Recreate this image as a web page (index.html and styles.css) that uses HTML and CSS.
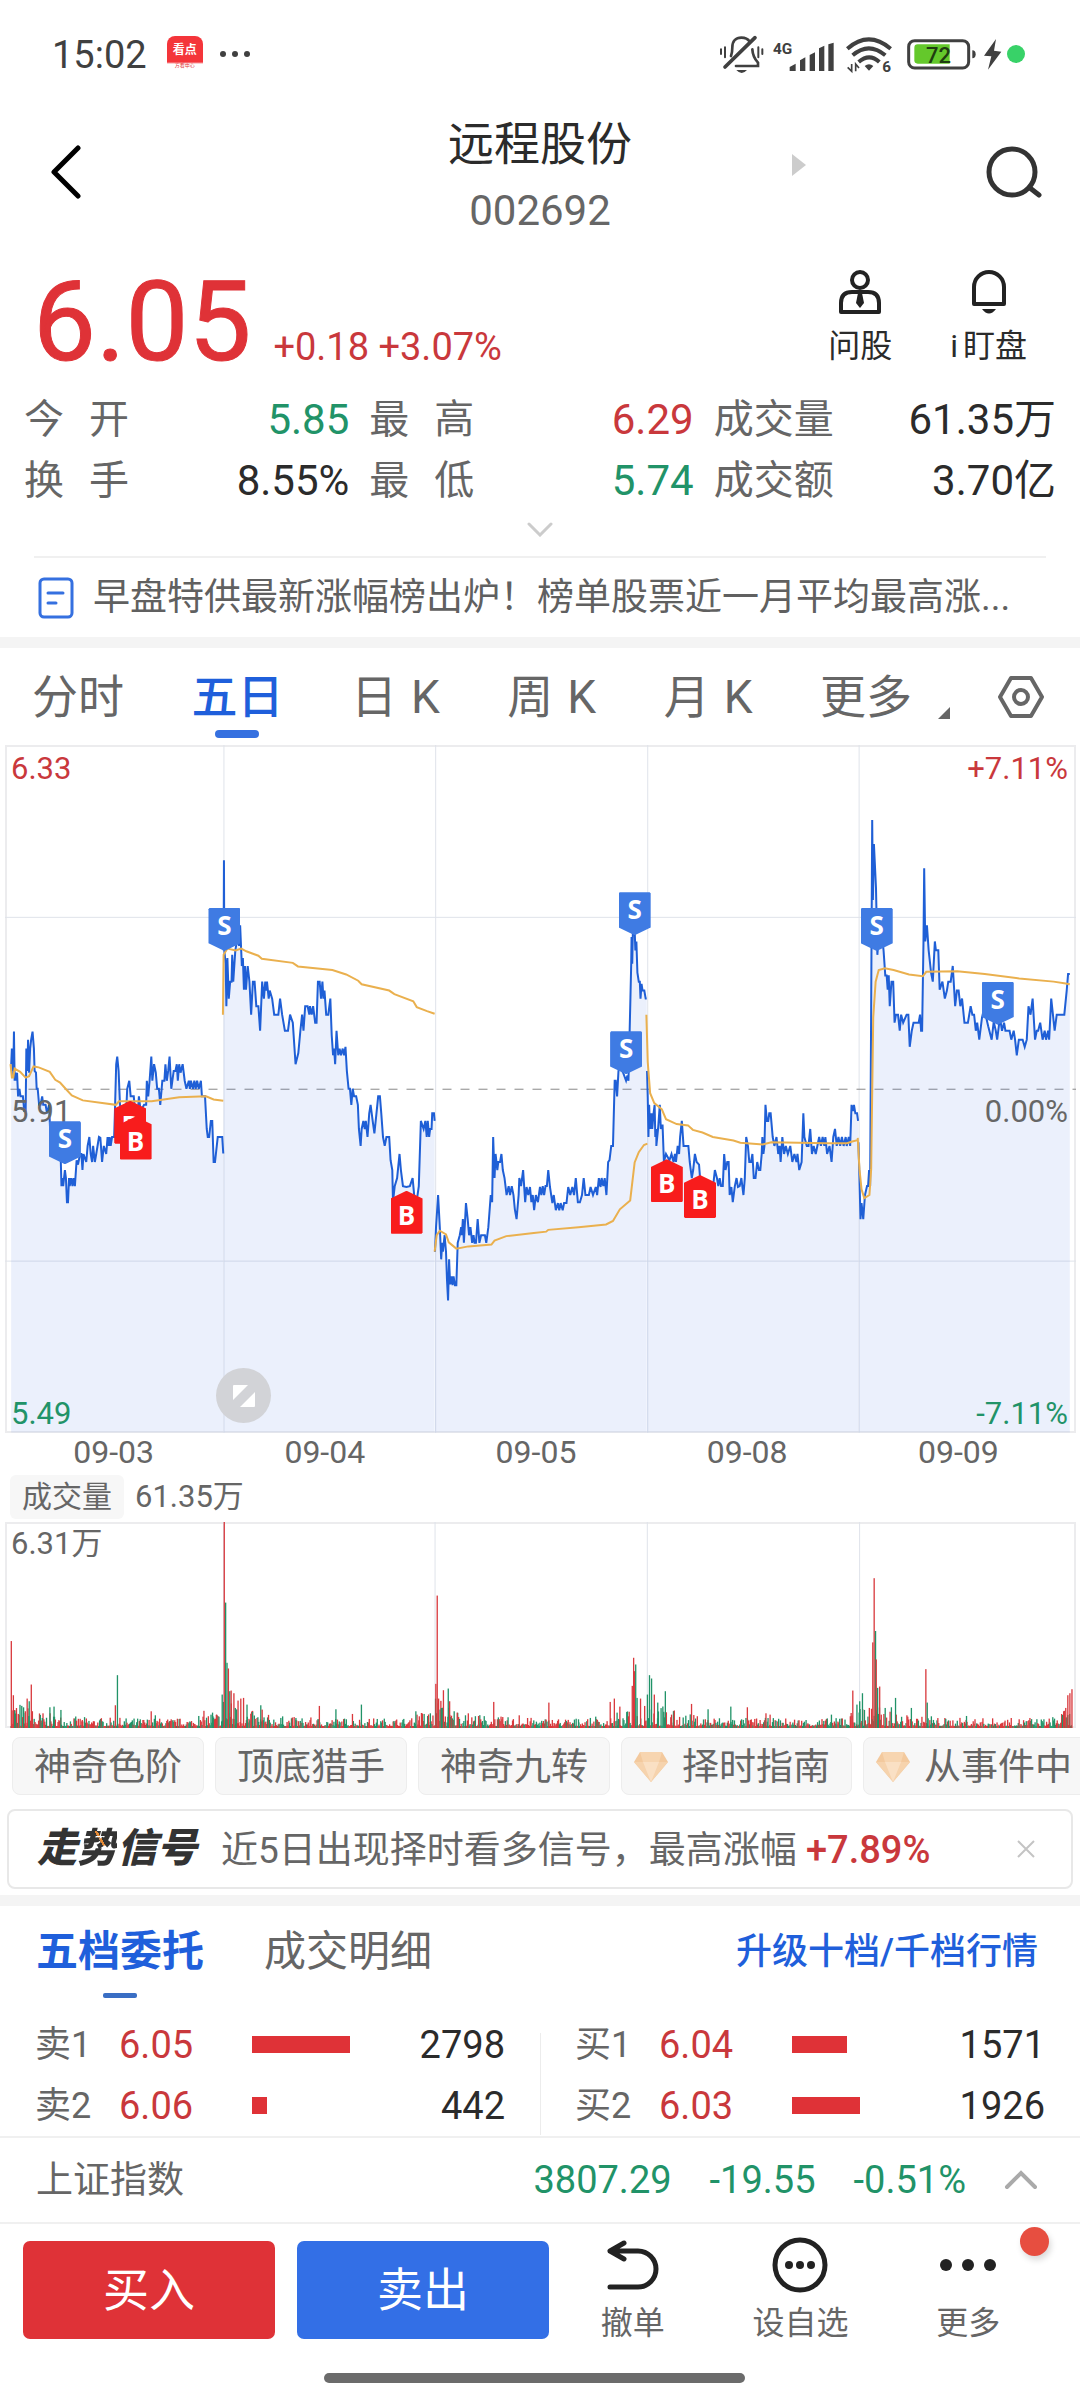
FILE: index.html
```html
<!DOCTYPE html>
<html lang="zh-CN">
<head>
<meta charset="utf-8">
<meta name="viewport" content="width=device-width, initial-scale=1">
<title>远程股份 002692</title>
<link rel="stylesheet" href="styles.css">
</head>
<body>
<div class="status">
  <div class="status-side">
    <span class="clock">15:02</span>
    <span class="app-badge"><b>看点</b><i>方看中心</i></span>
    <svg class="status-dots" viewBox="0 0 32 8"><circle cx="4" cy="4" r="3"/><circle cx="16" cy="4" r="3"/><circle cx="28" cy="4" r="3"/></svg>
  </div>
  <div class="status-side status-right">
    <svg width="46" height="39" viewBox="58 45 138 117" fill="none" stroke="#404040" stroke-width="8" stroke-linecap="round">
      <path d="M64 88v14M76 82v30M176 82v30M188 88v14" stroke-width="6"/>
      <path d="M94 108c3-8 4-16 4-26 0-18 10-29 27-29 12 0 20 4 25 12M158 88c1 18 6 28 17 40v10h-66"/>
      <path d="M76 141L166 53" stroke-width="11"/>
      <path d="M110 150h32q-16 18-32 0z" fill="#404040" stroke="none"/>
    </svg>
    <svg class="signal-bars" width="61" height="37" viewBox="217 42 183 111" fill="#404040">
      <text x="217" y="95" class="net">4G</text>
      <path d="M267 147v-12l18-10v22zM298 147v-32l16-9v41zM327 147v-48l16-8v56zM355 147v-68l16-8v76zM383 147V67l16-5v85z"/>
    </svg>
    <svg class="wifi" width="47" height="37" viewBox="438 50 141 111" fill="none" stroke="#404040" stroke-width="12">
      <path d="M442 88q64-56 130 0M458 108q48-42 98 0M476 128q32-28 62 0"/>
      <path d="M494 140q13-10 26 0l-13 14z" fill="#404040" stroke="none"/>
      <path d="M455 134v22l-12-12M467 156v-22l10 12" stroke-width="5"/>
      <text x="547" y="157" class="wifi-gen">6</text>
    </svg>
    <svg class="battery" width="69" height="31" viewBox="620 56 207 93">
      <rect x="625" y="61" width="180" height="82" rx="18" fill="#fff" stroke="#404040" stroke-width="9"/>
      <path d="M652 72h96v58h-96q-10 0-10-10V82q0-10 10-10z" fill="#64c82b"/>
      <path d="M816 90q10 0 10 12t-10 12z" fill="#404040"/>
      <text x="677" y="127" class="level">72</text>
    </svg>
    <svg class="bolt" width="19" height="31" viewBox="847 56 57 93"><path d="M886 56l-36 50 22 2-10 40 40-54-22-3z" fill="#404040"/></svg>
    <span class="live-dot"></span>
  </div>
</div>

<header class="header">
  <button class="icon-btn" aria-label="返回"><svg width="30" height="54" viewBox="0 0 30 54" fill="none" stroke="#000" stroke-width="5" stroke-linecap="round" stroke-linejoin="round"><path d="M27 3L3 27l24 24"/></svg></button>
  <div class="title">
    <h1>远程股份</h1>
    <p>002692</p>
  </div>
  <div class="header-end">
    <button class="icon-btn next" aria-label="下一只"><svg width="14" height="22" viewBox="0 0 14 22"><path d="M0 0l14 11L0 22z" fill="#ccc"/></svg></button>
    <button class="icon-btn" aria-label="搜索"><svg width="56" height="52" viewBox="0 0 56 52" fill="none" stroke="#333" stroke-width="5" stroke-linecap="round"><circle cx="26" cy="26" r="23"/><path d="M44 42l9 7"/></svg></button>
  </div>
</header>

<section class="quote">
  <div class="price"><strong>6.05</strong><span>+0.18 +3.07%</span></div>
  <div class="quote-tools">
    <button class="tool"><svg width="42" height="44" viewBox="0 0 42 44" fill="none" stroke="#222" stroke-width="4"><circle cx="21" cy="10" r="8"/><path d="M2 42V33Q2 22 13 22H29Q40 22 40 33V42z" stroke-linejoin="round"/><path d="M19 23h4l2 10-4 5-4-5z" fill="#222" stroke="none"/></svg>问股</button>
    <button class="tool"><svg width="34" height="44" viewBox="0 0 34 44" fill="none" stroke="#222" stroke-width="4"><path d="M2 34V17a15 15 0 0 1 30 0v17z" stroke-linejoin="round"/><path d="M10 39h14q-7 9-14 0z" fill="#222" stroke="none"/></svg><span>i<span class="watch">盯盘</span></span></button>
  </div>
</section>

<dl class="stats">
  <div><dt class="spread"><span>今</span><span>开</span></dt><dd class="down">5.85</dd></div>
  <div><dt class="spread"><span>最</span><span>高</span></dt><dd class="up">6.29</dd></div>
  <div><dt>成交量</dt><dd>61.35万</dd></div>
  <div><dt class="spread"><span>换</span><span>手</span></dt><dd>8.55%</dd></div>
  <div><dt class="spread"><span>最</span><span>低</span></dt><dd class="down">5.74</dd></div>
  <div><dt>成交额</dt><dd>3.70亿</dd></div>
</dl>
<button class="expand" aria-label="展开"><svg width="26" height="15" viewBox="0 0 26 15" fill="none" stroke="#ccc" stroke-width="3" stroke-linecap="round"><path d="M2 2l11 11L24 2"/></svg></button>

<a class="news" href="#news">
  <svg width="36" height="42" viewBox="0 0 36 42" fill="none" stroke="#3570e0" stroke-width="3" stroke-linecap="round"><rect x="2" y="2" width="32" height="38" rx="4"/><path d="M10 16h15M10 26h8"/></svg>
  <span>早盘特供最新涨幅榜出炉！榜单股票近一月平均最高涨...</span>
</a>
<div class="band"></div>

<nav class="periods">
  <div class="period-list">
    <button>分时</button>
    <button class="active">五日</button>
    <button><span>日</span><span>K</span></button>
    <button><span>周</span><span>K</span></button>
    <button><span>月</span><span>K</span></button>
    <button>更多</button>
  </div>
  <svg class="corner" width="12" height="12" viewBox="0 0 12 12"><path d="M12 0v12H0z" fill="#666"/></svg>
  <button class="icon-btn" aria-label="设置"><svg width="46" height="42" viewBox="0 0 46 42" fill="none" stroke="#666" stroke-width="4" stroke-linejoin="round"><path d="M13 2h20l11 19-11 19H13L2 21z"/><circle cx="23" cy="21" r="7"/></svg></button>
</nav>

<section class="price-chart">
  <svg id="price" viewBox="14 10 3111 1541" preserveAspectRatio="none"></svg>
  <span class="axis top-left up">6.33</span>
  <span class="axis top-right up">+7.11%</span>
  <span class="axis mid-left">5.91</span>
  <span class="axis mid-right">0.00%</span>
  <span class="axis bottom-left down">5.49</span>
  <span class="axis bottom-right down">-7.11%</span>
  <span class="mark sell" style="left:4.1%;top:54.7%">S</span>
  <span class="mark buy" style="left:10.2%;top:51.7%">B</span>
  <span class="mark buy" style="left:10.7%;top:54%">B</span>
  <span class="mark sell" style="left:19%;top:23.7%">S</span>
  <span class="mark buy" style="left:36%;top:64.8%">B</span>
  <span class="mark sell" style="left:57.3%;top:21.4%">S</span>
  <span class="mark sell" style="left:56.5%;top:41.6%">S</span>
  <span class="mark buy" style="left:60.3%;top:60.2%">B</span>
  <span class="mark buy" style="left:63.4%;top:62.5%">B</span>
  <span class="mark sell" style="left:79.9%;top:23.7%">S</span>
  <span class="mark sell" style="left:91.2%;top:34.4%">S</span>
  <button class="fullscreen" aria-label="全屏"><svg width="24" height="24" viewBox="0 0 24 24" fill="#fff"><path d="M1 2q0-1 1-1h14L1 16zM23 8v14q0 1-1 1H8z"/></svg></button>
</section>
<div class="dates"><span>09-03</span><span>09-04</span><span>09-05</span><span>09-08</span><span>09-09</span></div>

<div class="volume-head"><button class="chip-sm">成交量</button><span>61.35万</span></div>
<section class="volume-chart">
  <svg id="volume" viewBox="8 308 1554 616" preserveAspectRatio="none"></svg>
  <span class="axis volume-max">6.31万</span>
</section>

<div class="chips">
  <button class="chip">神奇色阶</button>
  <button class="chip">顶底猎手</button>
  <button class="chip">神奇九转</button>
  <button class="chip gem"><svg width="34" height="30" viewBox="0 0 34 30"><path d="M6 0h22l6 10-17 20L0 10z" fill="#f3c99d"/><path d="M0 10h34L17 30z" fill="#f6d3ad"/><path d="M9 10h16l-8 20z" fill="#fae0c4"/><path d="M6 0l3 10h16l3-10z" fill="#f7d5b0"/></svg>择时指南</button>
  <button class="chip gem"><svg width="34" height="30" viewBox="0 0 34 30"><path d="M6 0h22l6 10-17 20L0 10z" fill="#f3c99d"/><path d="M0 10h34L17 30z" fill="#f6d3ad"/><path d="M9 10h16l-8 20z" fill="#fae0c4"/><path d="M6 0l3 10h16l3-10z" fill="#f7d5b0"/></svg>从事件中</button>
</div>

<aside class="signal">
  <strong class="signal-logo">走<span>势</span>信号</strong>
  <p>近5日出现择时看多信号，最高涨幅 <b>+7.89%</b></p>
  <button class="icon-btn" aria-label="关闭"><svg width="18" height="18" viewBox="0 0 18 18" stroke="#c4c4c4" stroke-width="2"><path d="M1 1l16 16M17 1L1 17"/></svg></button>
</aside>
<div class="band"></div>

<nav class="book-tabs">
  <button class="active">五档委托</button>
  <button>成交明细</button>
  <a href="#upgrade">升级十档/千档行情</a>
</nav>
<section class="book">
  <table>
    <tr><th scope="row">卖1</th><td class="up">6.05</td><td><i class="bar" style="width:98px"></i></td><td class="qty">2798</td></tr>
    <tr><th scope="row">卖2</th><td class="up">6.06</td><td><i class="bar" style="width:15px"></i></td><td class="qty">442</td></tr>
  </table>
  <table>
    <tr><th scope="row">买1</th><td class="up">6.04</td><td><i class="bar" style="width:55px"></i></td><td class="qty">1571</td></tr>
    <tr><th scope="row">买2</th><td class="up">6.03</td><td><i class="bar" style="width:68px"></i></td><td class="qty">1926</td></tr>
  </table>
</section>

<section class="index-row">
  <span class="index-name">上证指数</span>
  <span class="down">3807.29</span><span class="down">-19.55</span><span class="down">-0.51%</span>
  <button class="icon-btn" aria-label="展开指数"><svg width="34" height="20" viewBox="0 0 34 20" fill="none" stroke="#aaa" stroke-width="4" stroke-linecap="round"><path d="M3 17L17 3l14 14"/></svg></button>
</section>

<footer class="actions">
  <div class="trade"><button class="buy-btn">买入</button><button class="sell-btn">卖出</button></div>
  <div class="tools">
    <button><svg width="56" height="56" viewBox="0 0 56 56" fill="none" stroke="#222" stroke-width="5" stroke-linecap="round" stroke-linejoin="round"><path d="M5 50h28a18 18 0 0 0 0-36H5M19 6L5 14l14 8"/></svg>撤单</button>
    <button><svg width="56" height="56" viewBox="0 0 56 56" fill="#222"><circle cx="28" cy="28" r="25" fill="none" stroke="#222" stroke-width="5"/><circle cx="17" cy="28" r="4"/><circle cx="28" cy="28" r="4"/><circle cx="39" cy="28" r="4"/></svg>设自选</button>
    <button><svg width="56" height="56" viewBox="0 0 56 56" fill="#222"><circle cx="6" cy="28" r="6"/><circle cx="28" cy="28" r="6"/><circle cx="50" cy="28" r="6"/></svg>更多<span class="dot"></span></button>
  </div>
</footer>
<div class="home-bar"></div>
<script src="chart.js"></script>
</body>
</html>
```
FILE: styles.css
```css
* { box-sizing: border-box; }
body {
  margin: 0;
  overflow-x: hidden;
  background: #fff;
  color: #2b2b2b;
  font-family: Roboto, "Noto Sans CJK SC", sans-serif;
  font-size: 38px;
  line-height: 1;
}
h1, p, dl, dd { margin: 0; }
svg { display: block; flex: none; }
button {
  margin: 0;
  padding: 0;
  border: 0;
  background: none;
  color: inherit;
  font: inherit;
  white-space: nowrap;
}
a { color: inherit; text-decoration: none; }
.up { color: #c9383c; }
.down { color: #219368; }
.band { height: 11px; background: #f4f4f4; }

/* status bar */
.status { display: flex; justify-content: space-between; align-items: center; height: 108px; padding: 0 55px 0 52px; color: #404040; }
.status-side { display: flex; align-items: center; }
.clock { font-size: 38px; padding-top: 2px; }
.app-badge { display: flex; flex-direction: column; align-items: center; width: 36px; height: 36px; margin: 0 16px 0 20px; padding-top: 8px; overflow: hidden; border-radius: 8px; background: linear-gradient(#f4353a 26px, #fff 28px); color: #fff; }
.app-badge b { font-size: 12px; line-height: 12px; }
.app-badge i { margin-top: 6px; color: #e23b3b; font-size: 5px; font-style: normal; line-height: 6px; }
.status-dots { width: 32px; height: 8px; fill: #404040; }
.status-right svg { overflow: visible; }
.signal-bars { margin-left: 8px; }
.net { font-size: 46px; font-weight: 700; }
.wifi { margin-left: 12px; }
.wifi-gen { fill: #404040; stroke: none; font-size: 46px; font-weight: 700; }
.battery { margin-left: 14px; }
.level { fill: #1f3d10; font-size: 66px; font-weight: 500; }
.bolt { margin: 0 5px 0 7px; }
.live-dot { width: 18px; height: 18px; border-radius: 50%; background: #38d268; }

/* title */
.header { display: grid; grid-template-columns: 1fr auto 1fr; align-items: center; height: 128px; padding: 0 38px; }
.header > .icon-btn { justify-self: start; padding-left: 13px; }
.title { display: flex; flex-direction: column; gap: 12px; align-items: center; padding-top: 5px; }
.title h1 { font-size: 46px; font-weight: 400; line-height: 60px; }
.title p { color: #666; font-size: 42px; line-height: 50px; }
.header-end { display: flex; justify-content: space-between; align-items: center; padding-left: 160px; }
.next { padding-bottom: 14px; }

/* last price */
.quote { display: flex; justify-content: space-between; height: 152px; padding: 30px 53px 0 33px; }
.price { display: flex; align-items: baseline; gap: 22px; height: 112px; }
.price strong { color: #df3237; font-size: 112px; font-weight: 400; line-height: 112px; -webkit-text-stroke: 1px #df3237; }
.price span { color: #c9383c; font-size: 38px; line-height: 40px; }
.quote-tools { display: flex; gap: 58px; align-items: flex-start; padding-top: 4px; }
.tool { display: flex; flex-direction: column; gap: 16px; align-items: center; font-size: 32px; line-height: 32px; }
.watch { margin-left: 5px; }

.stats { display: grid; grid-template-columns: 325fr 324fr 342fr; column-gap: 20px; padding: 0 24px; }
.stats div { display: flex; justify-content: space-between; align-items: center; height: 61px; padding-top: 3px; }
.stats dt { color: #666; font-size: 40px; }
.stats dd { font-size: 42px; }
.spread { display: flex; justify-content: space-between; width: 105px; }
.expand { display: flex; justify-content: center; width: 100%; height: 46px; padding-top: 12px; }

.news { display: flex; gap: 19px; align-items: center; height: 81px; margin: 0 34px; padding: 0 0 0 4px; border-top: 2px solid #f0f0f0; color: #606060; font-size: 37px; }
.news span { overflow: hidden; line-height: 50px; text-overflow: ellipsis; white-space: nowrap; }

/* period tabs */
.periods { display: flex; align-items: center; height: 97px; padding: 0 36px 0 32px; color: #666; font-size: 46px; }
.period-list { display: flex; flex: 1; justify-content: space-between; }
.period-list button { position: relative; display: flex; gap: 14px; height: 97px; align-items: center; }
.period-list .active { color: #1f5fdb; font-weight: 500; }
.period-list .active::after { content: ""; position: absolute; bottom: 7px; left: 50%; width: 44px; height: 8px; margin-left: -22px; border-radius: 4px; background: #3570e0; }
.corner { margin: 32px 48px 0 26px; }

/* charts */
.price-chart, .volume-chart { position: relative; margin: 0 4px 0 5px; box-shadow: inset 0 0 0 2px #ececee; }
.price-chart { height: 688px; }
.price-chart > svg, .volume-chart > svg { width: 100%; height: 100%; }
.price-chart > svg *, .volume-chart .grid { vector-effect: non-scaling-stroke; }
.grid { fill: none; stroke: #dfe3ea; stroke-width: 1px; }
.zero { fill: none; stroke: #888; stroke-width: 1px; stroke-dasharray: 9px 9px; }
.area { fill: rgba(54, 112, 230, 0.1); }
.line { fill: none; stroke: #1f5fd6; stroke-width: 2px; }
.avg { fill: none; stroke: #eab04e; stroke-width: 2px; }
.axis { position: absolute; font-size: 31px; line-height: 32px; color: #666; }
.axis.up { color: #c9383c; }
.axis.down { color: #219368; }
.top-left, .top-right { top: 8px; }
.mid-left, .mid-right { top: 351px; }
.bottom-left, .bottom-right { bottom: 3px; }
.top-left, .mid-left, .bottom-left { left: 6px; }
.top-right, .mid-right, .bottom-right { right: 8px; }
.mark { position: absolute; width: 32px; height: 43px; color: #fff; font: 700 26px/35px "Open Sans", sans-serif; text-align: center; }
.mark.sell { background: #3f7be3; clip-path: polygon(0 3%, 3% 0, 97% 0, 100% 3%, 100% 82%, 50% 100%, 0 82%); }
.mark.buy { padding-top: 7px; background: #f81c1c; clip-path: polygon(0 18%, 50% 0, 100% 18%, 100% 97%, 97% 100%, 3% 100%, 0 97%); }
.fullscreen { position: absolute; bottom: 10px; left: 211px; display: flex; justify-content: center; align-items: center; width: 55px; height: 55px; border-radius: 50%; background: #d2d3d7; }
.dates { display: grid; grid-template-columns: repeat(5, 1fr); height: 38px; padding: 0 16px 0 8px; color: #666; font-size: 32px; line-height: 38px; text-align: center; }
.volume-head { display: flex; gap: 11px; align-items: center; height: 51px; padding: 0 10px; color: #666; font-size: 31px; }
.chip-sm { height: 44px; padding: 0 12px; border-radius: 6px; background: #f7f7f7; font-size: 30px; }
.volume-chart { height: 206px; }
.volume-max { top: 6px; left: 6px; }
.vol-up { fill: #d9393d; }
.vol-down { fill: #219368; }

/* indicator chips */
.chips { display: flex; gap: 11px; height: 81px; padding: 9px 0 0 12px; overflow: hidden; }
.chip { display: flex; flex: none; align-items: center; height: 58px; padding: 2px 21px 0; border: 1px solid #ededed; border-radius: 8px; background: #f7f7f7; color: #666; font-size: 37px; }
.gem { gap: 14px; padding-left: 12px; }

.signal { display: flex; align-items: center; height: 80px; margin: 0 7px 6px; padding: 0 36px 0 28px; border: 2px solid #e8e8e8; border-radius: 8px; color: #666; font-size: 37px; }
.signal-logo { color: #333; font-size: 40px; font-style: italic; font-weight: 900; }
.signal-logo span { background: linear-gradient(60deg, transparent 46%, #e68a35 46%, #e68a35 54%, transparent 54%) 12px 6px / 24px 18px no-repeat, #333; background-clip: text; -webkit-background-clip: text; color: transparent; }
.signal p { flex: 1; margin-left: 24px; padding-top: 2px; white-space: nowrap; }
.signal b { color: #c9383c; font-size: 38px; font-weight: 500; }

/* order book */
.book-tabs { display: flex; gap: 60px; height: 107px; padding: 0 42px 0 36px; color: #666; font-size: 42px; line-height: 92px; }
.book-tabs button { position: relative; height: 92px; }
.book-tabs .active { color: #1f5fdb; font-weight: 700; }
.book-tabs .active::after { content: ""; position: absolute; bottom: 0; left: 50%; width: 34px; height: 5px; margin-left: -17px; border-radius: 2px; background: #3a6ec4; }
.book-tabs a { margin-left: auto; color: #1f5fdb; font-size: 36px; font-weight: 500; }
.book { display: grid; grid-template-columns: 1fr 1fr; padding: 0 35px; background: linear-gradient(#ececec, #ececec) center 20px / 1px 100% no-repeat; }
.book table { width: 100%; border-collapse: collapse; table-layout: fixed; }
.book table:first-child { width: calc(100% - 35px); }
.book table:last-child { width: calc(100% - 35px); margin-left: 35px; }
.book th, .book td { height: 61px; padding: 2px 0 0; text-align: left; white-space: nowrap; }
.book th { width: 84px; color: #666; font-size: 36px; font-weight: 400; }
.book td:nth-child(2) { width: 133px; }
.book .qty { text-align: right; }
.bar { display: block; height: 17px; background: #df3237; }

.index-row { display: flex; gap: 38px; align-items: center; height: 88px; margin-top: 1px; padding: 0 42px 0 36px; border: solid #f0f0f0; border-width: 2px 0; }
.index-name { flex: 1; color: #666; font-size: 37px; }

/* bottom actions */
.actions { display: flex; padding: 13px 28px 16px 23px; }
.trade { display: flex; flex: 526; gap: 22px; padding-top: 4px; }
.trade button { flex: 1; height: 98px; border-radius: 7px; color: #fff; font-size: 46px; }
.buy-btn { background: #df3237; }
.sell-btn { background: #336fe6; }
.tools { display: grid; flex: 503; grid-template-columns: repeat(3, 1fr); color: #666; font-size: 32px; line-height: 32px; }
.tools button { position: relative; display: flex; flex-direction: column; gap: 14px; align-items: center; }
.dot { position: absolute; top: -10px; right: 3px; width: 29px; height: 29px; border-radius: 50%; background: #e74e40; box-shadow: 2px 4px 6px rgba(0, 0, 0, 0.15); }
.home-bar { width: 39%; height: 10px; margin: 18px auto 17px 30%; border-radius: 5px; background: #6b6b6b; }
```
FILE: chart.js
```js
// Price and average series, one string of x,y pairs per trading day.
const BASE = 1550;
const days = [
  '32,725 34,690 36,740 37,690 38,750 40,652 42,762 45,744 47,762 49,744 52,797 56,780 59,797 66,797 70,830 74,830 76,690 79,740 81,670 84,744 87,690 90,670 94,652 98,690 100,740 104,744 106,780 109,780 113,816 117,816 122,797 125,816 132,816 136,835 142,816 145,870 160,900 170,920 176,940 178,998 181,980 183,998 188,962 191,980 194,1034 197,1034 200,980 202,998 206,980 210,998 213,980 217,998 222,940 226,950 232,926 236,926 239,962 242,926 250,944 254,908 259,888 263,926 267,944 270,908 275,944 279,926 287,888 291,890 296,944 301,908 308,926 312,888 315,908 318,888 321,908 325,888 331,888 333,840 337,725 340,708 344,740 348,816 352,835 366,830 369,780 375,762 379,797 388,797 392,830 400,830 403,797 408,830 418,816 424,816 426,762 430,797 434,762 439,708 442,762 447,725 452,744 456,780 461,780 465,816 471,762 477,762 480,725 484,762 488,740 492,708 497,780 504,740 509,740 513,725 516,762 520,725 524,744 530,725 536,762 541,780 548,762 551,780 554,762 560,780 564,762 568,780 572,762 577,780 583,762 586,797 595,797 600,870 603,888 607,888 612,852 616,852 620,944 624,944 632,888 645,888 648,925',
  '649,470 650,268 651,470 655,500 657,595 660,487 664,578 668,540 672,540 674,480 677,540 683,470 690,440 694,460 697,414 702,505 705,487 708,558 711,505 714,558 719,505 724,540 729,614 734,540 739,540 744,595 750,595 755,650 761,540 766,578 770,540 773,560 775,540 780,578 783,560 790,578 796,614 808,614 813,578 819,614 827,650 836,650 842,614 850,632 858,725 866,700 872,650 877,614 881,650 886,595 893,595 898,614 900,595 905,614 909,595 915,632 919,632 923,540 928,540 932,578 936,540 939,578 942,560 947,614 953,614 959,578 963,660 967,705 970,690 973,725 977,650 982,705 986,690 990,705 995,690 999,705 1003,686 1007,740 1012,780 1016,780 1020,816 1024,780 1028,797 1034,797 1039,816 1042,870 1047,908 1050,870 1055,852 1059,870 1062,852 1067,888 1072,835 1076,816 1082,852 1087,880 1093,835 1098,797 1103,797 1107,835 1112,888 1117,908 1122,888 1130,888 1134,940 1139,962 1141,1034 1146,998 1153,980 1160,926 1164,962 1170,998 1180,1000 1190,998 1198,980 1204,1030 1212,1020 1216,998 1222,852 1230,870 1235,852 1239,888 1242,852 1246,888 1249,870 1253,870 1255,835 1260,835 1262,852',
  '1263,1145 1266,1090 1269,1055 1272,1018 1277,1090 1281,1162 1284,1125 1286,1145 1291,1108 1295,1145 1298,1210 1301,1254 1304,1162 1307,1218 1311,1200 1314,1220 1317,1200 1321,1220 1325,1220 1329,1125 1335,1108 1339,1090 1341,1108 1344,1072 1347,1125 1353,1036 1358,1072 1362,1108 1366,1090 1371,1125 1375,1108 1378,1125 1382,1125 1387,1072 1392,1125 1397,1108 1408,1108 1412,1125 1418,1090 1425,1018 1429,1034 1432,888 1436,980 1439,926 1444,962 1447,944 1452,944 1456,926 1460,962 1465,980 1471,1018 1477,998 1481,1018 1486,998 1491,1018 1495,1050 1500,1072 1506,1018 1508,980 1513,998 1519,962 1525,1034 1529,1000 1534,1018 1539,1000 1543,1034 1547,1018 1551,1052 1556,1018 1562,1034 1568,1000 1572,1018 1576,998 1580,1018 1584,998 1588,998 1592,962 1597,1000 1604,1036 1608,1018 1614,1052 1620,1036 1624,1052 1628,1036 1634,1052 1638,1036 1645,1036 1650,1000 1656,1018 1662,1000 1667,1018 1672,980 1678,1034 1684,1034 1690,1018 1695,980 1700,1018 1710,1018 1715,1000 1722,1018 1730,1000 1734,1018 1739,980 1744,1000 1747,980 1752,998 1756,980 1761,1018 1766,944 1770,940 1775,908 1780,908 1785,762 1788,762 1792,797 1796,740 1800,730 1810,745 1818,762 1822,750 1825,762 1830,600 1833,500 1834,440 1836,500 1838,420 1842,400 1845,470 1848,450 1851,520 1855,540 1858,540 1860,578 1863,545 1866,560 1871,560 1875,578 1878,578',
  '1879,740 1881,800 1883,888 1885,816 1888,870 1892,835 1894,870 1898,835 1901,816 1903,888 1906,870 1906,908 1911,870 1916,816 1919,870 1924,860 1928,944 1934,926 1944,940 1950,926 1956,944 1960,926 1963,944 1968,908 1972,926 1975,888 1980,852 1985,908 1999,908 2003,944 2009,980 2013,962 2018,926 2023,944 2030,950 2034,990 2050,990 2060,995 2072,990 2076,962 2082,980 2086,998 2090,980 2094,998 2099,998 2103,926 2107,962 2112,944 2116,944 2119,1018 2124,1000 2128,1034 2134,998 2139,980 2143,1000 2148,998 2153,980 2156,1000 2159,1018 2163,980 2167,888 2172,908 2176,944 2181,944 2185,926 2189,980 2194,980 2199,944 2204,962 2208,962 2212,926 2214,888 2217,926 2220,908 2223,816 2227,852 2231,852 2234,835 2238,835 2244,888 2249,908 2255,888 2260,926 2264,908 2267,944 2272,888 2277,926 2282,908 2288,926 2295,908 2301,944 2307,926 2313,944 2316,926 2321,962 2328,944 2333,835 2336,888 2343,908 2348,908 2353,870 2358,926 2363,908 2369,926 2379,888 2384,908 2389,888 2394,908 2397,888 2402,926 2409,908 2415,944 2420,888 2425,870 2430,908 2435,888 2440,908 2445,888 2450,908 2456,888 2459,908 2465,888 2469,908 2473,816 2477,830 2480,816 2484,835 2489,835 2492,852',
  '2493,900 2496,980 2499,1072 2502,1036 2507,1072 2512,1018 2518,998 2521,998 2524,962 2527,998 2530,600 2533,178 2535,357 2538,232 2544,330 2548,480 2556,400 2566,470 2571,526 2575,526 2578,558 2581,526 2584,595 2589,540 2594,540 2598,632 2602,614 2608,614 2613,650 2617,614 2623,632 2633,614 2638,614 2642,686 2648,650 2653,632 2668,632 2672,614 2675,650 2678,650 2682,450 2684,286 2687,450 2692,414 2697,470 2704,520 2709,540 2715,450 2718,470 2725,470 2729,558 2737,540 2744,578 2750,560 2754,540 2761,540 2767,505 2774,595 2779,560 2784,560 2789,595 2794,578 2801,632 2811,632 2819,595 2824,614 2829,614 2834,650 2838,632 2844,670 2852,620 2858,600 2870,640 2880,670 2886,630 2892,650 2896,670 2904,620 2910,650 2916,632 2920,650 2932,650 2937,670 2944,650 2948,670 2953,705 2959,670 2970,670 2976,686 2982,670 2987,595 2993,614 2999,578 3006,670 3011,650 3015,650 3021,632 3028,670 3034,650 3038,670 3044,650 3047,670 3053,578 3058,614 3063,650 3069,614 3091,614 3098,560 3102,523 3107,523'
];
const averages = [
  '30,725 34,755 38,755 42,735 58,742 74,755 84,752 97,730 112,732 144,742 160,760 174,766 190,780 208,795 240,806 336,816 345,808 440,808 520,799 598,797 620,804 648,807',
  '647,614 649,480 660,466 684,470 700,466 715,472 750,482 760,489 850,498 865,506 965,514 1005,524 1040,538 1050,546 1130,560 1145,568 1200,584 1210,597 1240,606 1262,612',
  '1262,1145 1268,1108 1277,1098 1295,1106 1303,1124 1325,1138 1360,1133 1427,1129 1436,1120 1470,1110 1550,1103 1586,1100 1592,1096 1680,1090 1760,1084 1780,1076 1800,1050 1830,1030 1843,945 1855,922 1870,906 1880,903',
  '1877,614 1881,720 1888,790 1900,812 1922,826 1934,848 1965,859 1998,862 2012,872 2040,878 2070,888 2130,896 2150,901 2215,905 2240,900 2400,902 2460,902 2475,898 2491,895',
  '2491,890 2496,960 2502,1005 2510,1025 2525,1018 2530,960 2536,620 2543,540 2552,514 2570,510 2595,514 2640,524 2680,528 2690,518 2780,517 2860,523 2960,533 3060,540 3095,544 3107,546'
];
let svg = '<path class="grid" d="M14 396H3125M14 1166H3125M650 10V1551M1265 10V1551M1881 10V1551M2495 10V1551"/><path class="zero" d="M30 781H3125"/>';
days.forEach((pts) => {
  const p = pts.split(' ');
  const first = p[0].split(',')[0];
  const last = p[p.length - 1].split(',')[0];
  svg += `<polygon class="area" points="${first},${BASE} ${pts} ${last},${BASE}"/>`;
});
days.forEach((pts) => { svg += `<polyline class="line" points="${pts}"/>`; });
averages.forEach((pts) => { svg += `<polyline class="avg" points="${pts}"/>`; });
document.getElementById('price').innerHTML = svg;

// Per-minute volume: low background trades plus the notable peaks.
let seed = 7;
const rand = () => (seed = (seed * 16807) % 2147483647) / 2147483647;
const peaks = 'u17,260 u20,98 d22,52 d35,45 u40,88 d43,80 u46,130 d62,30 d73,62 d79,64 d89,54 u120,24 u168,68 d171,158 u220,50 d226,38 d289,36 d309,46 u315,40 d323,100 u326,616 d328,375 d330,195 u332,178 d334,110 u336,112 u340,104 d342,60 u346,82 u350,88 u354,90 d359,70 d367,48 d379,68 u381,55 d430,30 u464,66 d488,56 u512,42 d525,70 d604,50 u609,35 d625,44 u633,132 u635,396 u637,88 d641,60 u644,113 d651,118 u653,80 u664,46 d676,38 u695,36 u717,78 u754,38 u797,76 d840,26 d865,34 u886,78 u892,88 d896,46 u900,64 d910,48 u918,126 u920,210 u921,170 d923,190 d925,90 u930,88 u936,66 d940,100 d943,158 d946,148 u950,100 d955,76 d966,110 u975,40 u1004,72 d1028,56 d1061,64 u1085,62 u1112,44 u1118,40 d1207,40 u1238,112 d1244,70 d1248,80 d1252,104 u1262,60 u1267,256 u1269,448 d1271,290 u1272,205 d1274,120 u1277,124 d1285,60 d1294,62 d1300,90 d1323,60 u1344,176 d1346,76 d1352,35 d1403,36 u1495,30 u1544,50 u1547,60 u1550,98 u1553,104 u1556,116';
let bars = '<path class="grid" d="M325 308V924M632 308V924M940 308V924M1248 308V924"/>';
const bar = (x, h, up) => { bars += `<rect class="${up ? 'vol-up' : 'vol-down'}" x="${x.toFixed(1)}" y="${(924 - h).toFixed(1)}" width="1.9" height="${h.toFixed(1)}"/>`; };
for (let i = 0; i < 1200; i++) {
  const x = 16 + i * 1.283;
  const t = (i % 240) / 240;
  const env = 24 + 75 * Math.exp(-t * 9) + (t > 0.9 ? 22 : 0);
  bar(x, 6 + env * Math.pow(rand(), 2.2), rand() < 0.6);
}
peaks.split(' ').forEach((p) => {
  const [x, h] = p.slice(1).split(',').map(Number);
  bar(x - 0.8, h, p[0] === 'u');
});
document.getElementById('volume').innerHTML = bars;
```
